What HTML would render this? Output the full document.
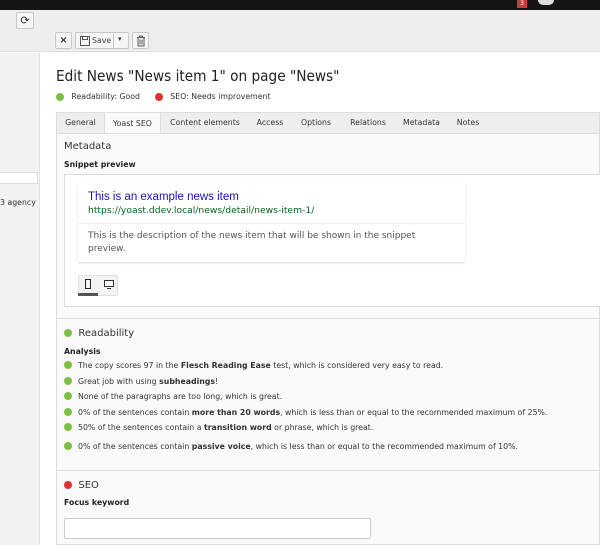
<!DOCTYPE html>
<html><head><meta charset="utf-8"><style>
*{box-sizing:border-box;margin:0;padding:0}
body{width:600px;height:545px;overflow:hidden;background:#fff;font-family:"DejaVu Sans",Verdana,sans-serif;font-size:8px;color:#333;position:relative}
.abs{position:absolute}
.btn{position:absolute;background:#f6f6f6;border:1px solid #c8c8c8;border-radius:2px;height:17px}
.tab{position:absolute;top:112px;height:21px;line-height:21px;font-size:7.8px;color:#333;text-align:center}
.dot{display:inline-block;width:8px;height:8px;border-radius:50%;background:#7ac142;vertical-align:middle}
.li{position:absolute;left:64px;font-size:7.8px;color:#333;white-space:nowrap}
.li .dot{margin-right:6px;position:relative;top:-1px}
</style></head><body>
<div class="abs" style="left:0;top:0;width:600px;height:10px;background:#151515"></div>
<div class="abs" style="left:517px;top:0;width:10px;height:8px;background:#c83c3c;color:#fff;font-size:6px;text-align:center;line-height:8px">3</div>
<div class="abs" style="left:538px;top:0;width:16px;height:5px;background:#ddd;border-radius:0 0 8px 8px"></div>
<div class="abs" style="left:0;top:10px;width:600px;height:42px;background:#eee;border-bottom:1px solid #ddd"></div>
<div class="btn" style="left:16px;top:12px;width:18px;height:17px;text-align:center;font-size:11px;line-height:15px">⟳</div>
<div class="btn" style="left:55px;top:32px;width:17px;text-align:center;font-weight:bold;line-height:15px;font-size:10px">×</div>
<div class="btn" style="left:75px;top:32px;width:54px">
<svg class="abs" style="left:4px;top:3px" width="10" height="10"><rect x="0.5" y="0.5" width="9" height="9" fill="none" stroke="#555"/><rect x="2.5" y="0.5" width="5" height="3" fill="none" stroke="#555"/></svg>
<span class="abs" style="left:16px;top:3px;font-size:7.8px;color:#444">Save</span>
<div class="abs" style="left:37px;top:0;width:1px;height:15px;background:#c8c8c8"></div>
<span class="abs" style="left:42px;top:2px;font-size:7px">▾</span></div>
<div class="btn" style="left:132px;top:32px;width:17px"><svg class="abs" style="left:3px;top:2px" width="10" height="12"><path d="M1 2.5h8M3.5 2.5v-1.5h3v1.5M2 2.5v8.5h6v-8.5M4 4.5v5M6 4.5v5" fill="none" stroke="#555"/></svg></div>
<div class="abs" style="left:0;top:53px;width:40px;height:492px;background:#f2f2f2;border-right:1px solid #e4e4e4"></div>
<div class="abs" style="left:0;top:172px;width:38px;height:12px;background:#fff;border:1px solid #ddd;border-left:none"></div>
<div class="abs" style="left:0;top:198px;font-size:7.8px">3 agency</div>
<div class="abs" style="left:56px;top:67px;font-size:15.2px;color:#222;font-family:'DejaVu Sans Condensed','DejaVu Sans',sans-serif;white-space:nowrap">Edit News "News item 1" on page "News"</div>
<div class="abs" style="left:56px;top:92px;font-size:7.8px;white-space:nowrap"><span class="dot"></span>&nbsp;&nbsp; Readability: Good &nbsp;&nbsp;&nbsp;&nbsp; <span class="dot" style="background:#dc3232"></span>&nbsp;&nbsp; SEO: Needs improvement</div>
<div class="abs" style="left:56px;top:112px;width:544px;height:21px;background:#eee;border:1px solid #ddd;border-bottom:none"></div>
<div class="tab" style="left:57px;width:47px">General</div>
<div class="tab" style="left:104px;width:57px;background:#fafafa;border:1px solid #ddd;border-bottom:none;height:22px">Yoast SEO</div>
<div class="tab" style="left:161px;width:88px">Content elements</div>
<div class="tab" style="left:249px;width:42px">Access</div>
<div class="tab" style="left:291px;width:50px">Options</div>
<div class="tab" style="left:341px;width:54px">Relations</div>
<div class="tab" style="left:395px;width:53px">Metadata</div>
<div class="tab" style="left:448px;width:40px">Notes</div>
<div class="abs" style="left:56px;top:133px;width:544px;height:412px;background:#fafafa;border:1px solid #ddd"></div>
<div class="abs" style="left:64px;top:141px;font-size:10px">Metadata</div>
<div class="abs" style="left:64px;top:160px;font-size:7.8px;font-weight:bold;color:#222">Snippet preview</div>
<div class="abs" style="left:64px;top:174px;width:536px;height:133px;background:#fff;border:1px solid #ddd;border-right:none"></div>
<div class="abs" style="left:78px;top:184px;width:387px;height:78px;background:#fff;box-shadow:0 1px 2px rgba(0,0,0,.15)"></div>
<div class="abs" style="left:78px;top:223px;width:387px;height:1px;background:#eee"></div>
<div class="abs" style="left:88px;top:191px;font-size:11.5px;color:#1e0fbe;white-space:nowrap;font-family:'Liberation Sans',sans-serif">This is an example news item</div>
<div class="abs" style="left:88px;top:205px;font-size:9.2px;color:#006621;white-space:nowrap">https://yoast.ddev.local/news/detail/news-item-1/</div>
<div class="abs" style="left:88px;top:230px;font-size:9px;color:#545454;line-height:13px;width:350px">This is the description of the news item that will be shown in the snippet preview.</div>
<div class="abs" style="left:78px;top:275px;width:40px;height:21px;background:#f3f3f3;border:1px solid #ddd;border-radius:2px"></div>
<svg class="abs" style="left:84px;top:279px" width="30" height="14"><rect x="1.5" y="0.5" width="5" height="9" fill="none" stroke="#222"/><rect x="20.5" y="1.5" width="9" height="6" fill="none" stroke="#333"/><path d="M23 9.5h4" stroke="#333"/></svg>
<div class="abs" style="left:78px;top:293px;width:20px;height:3px;background:#555"></div>
<div class="abs" style="left:56px;top:318px;width:544px;height:1px;background:#ddd"></div>
<div class="abs" style="left:64px;top:328px;font-size:10px;white-space:nowrap"><span class="dot"></span>&nbsp; Readability</div>
<div class="abs" style="left:64px;top:347px;font-size:7.8px;font-weight:bold;color:#222">Analysis</div>
<div class="li" style="top:361px"><span class="dot"></span>The copy scores 97 in the <b>Flesch Reading Ease</b> test, which is considered very easy to read.</div>
<div class="li" style="top:377px"><span class="dot"></span>Great job with using <b>subheadings</b>!</div>
<div class="li" style="top:392px"><span class="dot"></span>None of the paragraphs are too long, which is great.</div>
<div class="li" style="top:408px"><span class="dot"></span>0% of the sentences contain <b>more than 20 words</b>, which is less than or equal to the recommended maximum of 25%.</div>
<div class="li" style="top:423px"><span class="dot"></span>50% of the sentences contain a <b>transition word</b> or phrase, which is great.</div>
<div class="li" style="top:442px"><span class="dot"></span>0% of the sentences contain <b>passive voice</b>, which is less than or equal to the recommended maximum of 10%.</div>
<div class="abs" style="left:56px;top:470px;width:544px;height:1px;background:#ddd"></div>
<div class="abs" style="left:64px;top:480px;font-size:10px;white-space:nowrap"><span class="dot" style="background:#dc3232"></span>&nbsp; SEO</div>
<div class="abs" style="left:64px;top:498px;font-size:7.8px;font-weight:bold;color:#222">Focus keyword</div>
<div class="abs" style="left:64px;top:518px;width:307px;height:21px;background:#fff;border:1px solid #ccc;border-radius:2px"></div>
</body></html>
